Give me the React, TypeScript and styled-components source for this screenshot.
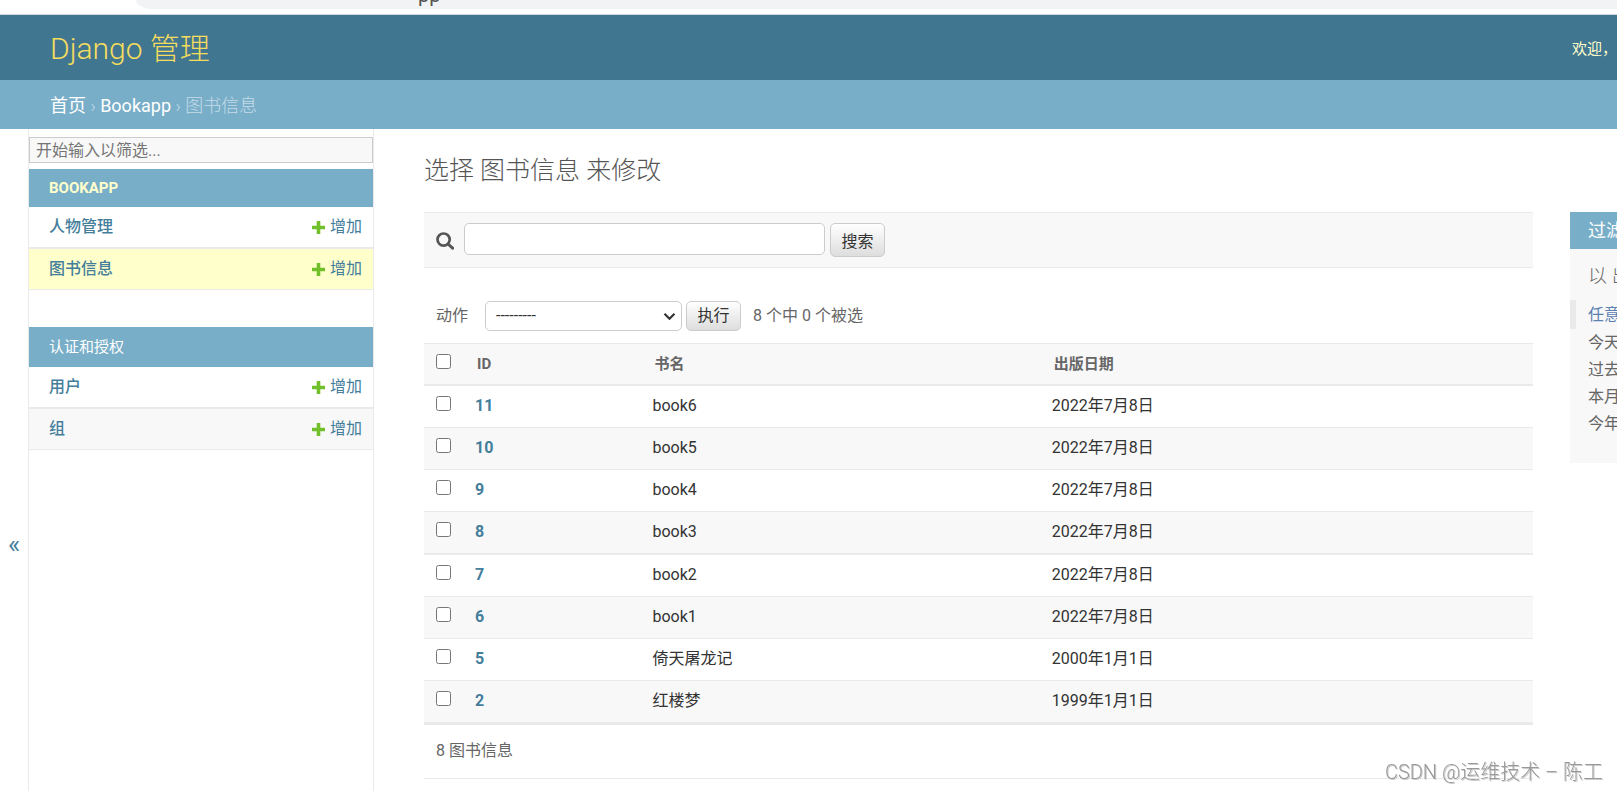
import React from "react";
import styled, { createGlobalStyle } from "styled-components";

const fontStack = `Roboto, "Noto Sans CJK SC", sans-serif`;

const GlobalStyle = createGlobalStyle`
  *, *::before, *::after { box-sizing: border-box; }
  body {
    margin: 0;
    background: #fff;
    color: #333;
    font: 400 16px/20px ${fontStack};
  }
  a { color: #447e9b; text-decoration: none; }
  input, select, button { font: inherit; margin: 0; }
`;

const Page = styled.div`
  display: flex;
  flex-direction: column;
  height: 100vh;
  overflow: hidden;
`;

const BrowserStrip = styled.div`
  flex: none;
  height: 15px;
  padding-left: 136px;
  border-bottom: 1px solid #d5d8da;
`;

const AddressBar = styled.div`
  display: flex;
  align-items: flex-end;
  height: 9px;
  padding: 0 0 4px 282px;
  overflow: hidden;
  background: #f1f3f4;
  border-bottom-left-radius: 16px 9px;
  color: #555;
  font-size: 20px;
  line-height: 20px;
`;

const Header = styled.header`
  flex: none;
  display: flex;
  align-items: center;
  justify-content: space-between;
  height: 65px;
  padding: 2px 0 0 50px;
  background: #417690;
  color: #ffc;
`;

const SiteName = styled.h1`
  margin: 0;
  font-size: 30px;
  line-height: 36px;
  font-weight: 300;
  color: #f5dd5d;
`;

const UserTools = styled.div`
  flex: none;
  font-size: 15px;
  white-space: nowrap;
`;

const Breadcrumbs = styled.nav`
  flex: none;
  padding: 15px 50px 13px;
  background: #79aec8;
  color: #c4dce8;
  font-size: 18px;
  line-height: 21px;
  font-weight: 300;

  a { color: #fff; font-weight: 400; }
`;

const Body = styled.div`
  flex: 1;
  display: flex;
  min-height: 0;
`;

const SidebarToggle = styled.button`
  flex: 0 0 28px;
  display: flex;
  justify-content: center;
  padding: 404px 0 0;
  border: 0;
  background: #fff;
  color: #447e9b;
  font-size: 26px;
  line-height: 22px;
`;

const Sidebar = styled.nav`
  flex: 0 0 346px;
  padding-top: 8px;
  border: solid #eaeaea;
  border-width: 0 1px;
`;

const NavFilter = styled.input`
  display: block;
  width: 100%;
  height: 26px;
  margin-bottom: 6px;
  padding: 0 6px;
  border: 1px solid #ccc;
  border-radius: 0;
  background: #f8f8f8;

  &::placeholder { color: #757575; }
`;

const AppTable = styled.table`
  width: 100%;
  margin-bottom: 37px;
  border-spacing: 0;

  th, td { padding: 0; border-bottom: 1px solid #eaeaea; }
  th { height: 41px; padding-left: 20px; text-align: left; font-weight: 500; }
  td { padding-right: 11px; }
  tr:first-of-type > * { height: 42px; border-bottom-width: 2px; }
`;

const AppCaption = styled.caption<{ $current?: boolean }>`
  padding: 0 20px;
  background: #79aec8;
  text-align: left;
  font-size: 15px;
  font-weight: ${(p) => (p.$current ? 700 : 400)};
  line-height: ${(p) => (p.$current ? 38 : 40)}px;

  a { color: ${(p) => (p.$current ? "#ffc" : "#fff")}; }
`;

const ModelRow = styled.tr<{ $tint?: string }>`
  background: ${(p) => p.$tint ?? "#fff"};
`;

const AddLink = styled.a`
  display: flex;
  align-items: center;
  justify-content: flex-end;
  gap: 5px;
`;

const Content = styled.main`
  flex: 1;
  min-width: 0;
  padding: 27px 0 0 50px;
`;

const PageTitle = styled.h2`
  margin: 0 0 26px;
  color: #555;
  font-size: 25px;
  line-height: 30px;
  font-weight: 300;
`;

const Columns = styled.div`
  display: flex;
  align-items: flex-start;
  gap: 37px;
`;

const ChangeList = styled.div`
  flex: 1;
  min-width: 0;
`;

const Toolbar = styled.form`
  display: flex;
  align-items: flex-start;
  padding: 10px 12px;
  border: solid #eaeaea;
  border-width: 1px 0;
  background: #f8f8f8;
`;

const SearchLabel = styled.label`
  display: flex;
  padding-top: 9px;
  margin-right: 10px;
`;

const SearchBox = styled.input`
  width: 361px;
  height: 32px;
  margin-right: 5px;
  padding: 0 6px;
  border: 1px solid #ccc;
  border-radius: 5px;
`;

const PushButton = styled.button<{ $tall?: boolean }>`
  width: 55px;
  height: ${(p) => (p.$tall ? 34 : 30)}px;
  padding: ${(p) => (p.$tall ? 3 : 0)}px 0 0;
  border: 1px solid #ccc;
  border-radius: 5px;
  background: linear-gradient(#fff, #ddd);
  color: #333;
  white-space: nowrap;
`;

const Actions = styled.form`
  display: flex;
  align-items: center;
  padding: 33px 12px 12px;
  color: #666;
`;

const ActionSelect = styled.span`
  display: grid;
  align-items: center;
  margin: 0 4px 0 17px;

  select, svg { grid-area: 1 / 1; }
  select {
    width: 197px;
    height: 30px;
    padding: 0 10px;
    border: 1px solid #ccc;
    border-radius: 5px;
    appearance: none;
    background: #fff;
    color: #333;
  }
  svg { justify-self: end; margin-right: 6px; pointer-events: none; }
`;

const Counter = styled.span`
  margin-left: 12px;
`;

const ResultTable = styled.table`
  width: 100%;
  table-layout: fixed;
  border-spacing: 0;
  border-top: 1px solid #eaeaea;
  border-bottom: 2px solid #eaeaea;

  th, td {
    height: 42px;
    padding: 10px 10px 0;
    border-bottom: 1px solid #eaeaea;
    text-align: left;
    vertical-align: top;
  }
  td a { font-weight: 700; }
  tr > :first-child { padding-left: 12px; }
  thead th {
    padding-left: 12px;
    border-bottom-width: 2px;
    background: #f8f8f8;
    color: #666;
    font-size: 15px;
    font-weight: 700;
  }
  tbody tr:nth-child(even) { background: #f8f8f8; }
  tbody tr:nth-child(4) td { height: 43px; border-bottom-width: 2px; }
`;

const Col = styled.col<{ $width?: string }>`
  width: ${(p) => p.$width ?? "auto"};
`;

const Check = styled.input`
  display: block;
  width: 15px;
  height: 15px;
`;

const Paginator = styled.p`
  margin: 0;
  padding: 16px 12px 17px;
  border-bottom: 1px solid #eaeaea;
  color: #666;
`;

const FilterPanel = styled.aside`
  flex: 0 0 47px;
  height: 251px;
  overflow: hidden;
  background: #f8f8f8;
  color: #666;
  white-space: nowrap;

  h2, h3 { margin: 0; padding-left: 18px; font-weight: 400; }
  h2 { background: #79aec8; color: #fff; font-size: 18px; line-height: 37px; }
  h3 { padding-top: 16px; padding-bottom: 11px; font-size: 19px; line-height: 24px; font-weight: 300; }
  ul { margin: 0; padding: 0; list-style: none; }
`;

const FilterOption = styled.li<{ $selected?: boolean }>`
  padding-left: 12px;
  border-left: 6px solid ${(p) => (p.$selected ? "#eaeaea" : "transparent")};
  line-height: ${(p) => (p.$selected ? 29 : 27)}px;

  a { color: ${(p) => (p.$selected ? "#5b80b2" : "#666")}; }
`;

const Watermark = styled.div`
  position: fixed;
  right: 14px;
  bottom: 7px;
  color: #999;
  font-size: 20px;
  line-height: 24px;
  font-weight: 300;
  text-shadow: 1px 1px 0 #ccc;
`;

const PlusIcon = () => (
  <svg width="13" height="13" viewBox="0 0 13 13" aria-hidden="true">
    <path d="M4.7 0h3.6v4.7H13v3.6H8.3V13H4.7V8.3H0V4.7h4.7z" fill="#70bf2b" />
  </svg>
);

const SearchIcon = () => (
  <svg width="18" height="18" viewBox="0 0 18 18" fill="none" stroke="#555" aria-hidden="true">
    <circle cx="7.6" cy="7.6" r="6.1" strokeWidth="2.7" />
    <path d="M12 12l4.6 4.2" strokeWidth="3" strokeLinecap="round" />
  </svg>
);

const ChevronIcon = () => (
  <svg width="13" height="9" viewBox="0 0 13 9" fill="none" stroke="#333" aria-hidden="true">
    <path d="M1.5 1.8l5 5 5-5" strokeWidth="2.2" />
  </svg>
);

const books = [
  ["11", "book6", "2022年7月8日"],
  ["10", "book5", "2022年7月8日"],
  ["9", "book4", "2022年7月8日"],
  ["8", "book3", "2022年7月8日"],
  ["7", "book2", "2022年7月8日"],
  ["6", "book1", "2022年7月8日"],
  ["5", "倚天屠龙记", "2000年1月1日"],
  ["2", "红楼梦", "1999年1月1日"],
];

const apps = [
  {
    name: "BOOKAPP",
    current: true,
    models: [{ name: "人物管理" }, { name: "图书信息", tint: "#ffc" }],
  },
  {
    name: "认证和授权",
    current: false,
    models: [{ name: "用户" }, { name: "组", tint: "#f8f8f8" }],
  },
];

const filterOptions = ["任意", "今天", "过去", "本月", "今年"];

export default function App() {
  return (
    <Page>
      <GlobalStyle />
      <BrowserStrip>
        <AddressBar>pp</AddressBar>
      </BrowserStrip>
      <Header>
        <SiteName>Django 管理</SiteName>
        <UserTools>欢迎，</UserTools>
      </Header>
      <Breadcrumbs>
        <a href="#home">首页</a> › <a href="#bookapp">Bookapp</a> › 图书信息
      </Breadcrumbs>
      <Body>
        <SidebarToggle type="button">«</SidebarToggle>
        <Sidebar>
          <NavFilter type="search" placeholder="开始输入以筛选..." aria-label="开始输入以筛选..." />
          {apps.map((app) => (
            <AppTable key={app.name}>
              <AppCaption $current={app.current}>
                <a href="#app">{app.name}</a>
              </AppCaption>
              <tbody>
                {app.models.map((model) => (
                  <ModelRow key={model.name} $tint={model.tint}>
                    <th scope="row">
                      <a href="#model">{model.name}</a>
                    </th>
                    <td>
                      <AddLink href="#add">
                        <PlusIcon />
                        增加
                      </AddLink>
                    </td>
                  </ModelRow>
                ))}
              </tbody>
            </AppTable>
          ))}
        </Sidebar>
        <Content>
          <PageTitle>选择 图书信息 来修改</PageTitle>
          <Columns>
            <ChangeList>
              <Toolbar>
                <SearchLabel htmlFor="searchbar">
                  <SearchIcon />
                </SearchLabel>
                <SearchBox id="searchbar" type="text" />
                <PushButton type="button" $tall>搜索</PushButton>
              </Toolbar>
              <Actions>
                <label htmlFor="action">动作</label>
                <ActionSelect>
                  <select id="action">
                    <option>---------</option>
                  </select>
                  <ChevronIcon />
                </ActionSelect>
                <PushButton type="button">执行</PushButton>
                <Counter>8 个中 0 个被选</Counter>
              </Actions>
              <ResultTable>
                <colgroup>
                  <Col $width="41px" />
                  <Col $width="16%" />
                  <Col $width="36%" />
                  <Col />
                </colgroup>
                <thead>
                  <tr>
                    <th scope="col">
                      <Check type="checkbox" aria-label="8 图书信息" />
                    </th>
                    <th scope="col">ID</th>
                    <th scope="col">书名</th>
                    <th scope="col">出版日期</th>
                  </tr>
                </thead>
                <tbody>
                  {books.map(([id, title, date]) => (
                    <tr key={id}>
                      <td>
                        <Check type="checkbox" aria-labelledby={`book-${id}`} />
                      </td>
                      <td>
                        <a id={`book-${id}`} href="#book">{id}</a>
                      </td>
                      <td>{title}</td>
                      <td>{date}</td>
                    </tr>
                  ))}
                </tbody>
              </ResultTable>
              <Paginator>8 图书信息</Paginator>
            </ChangeList>
            <FilterPanel>
              <h2>过滤</h2>
              <h3>以 出</h3>
              <ul>
                {filterOptions.map((option, i) => (
                  <FilterOption key={option} $selected={i === 0}>
                    <a href="#filter">{option}</a>
                  </FilterOption>
                ))}
              </ul>
            </FilterPanel>
          </Columns>
        </Content>
      </Body>
      <Watermark>CSDN @运维技术 – 陈工</Watermark>
    </Page>
  );
}
